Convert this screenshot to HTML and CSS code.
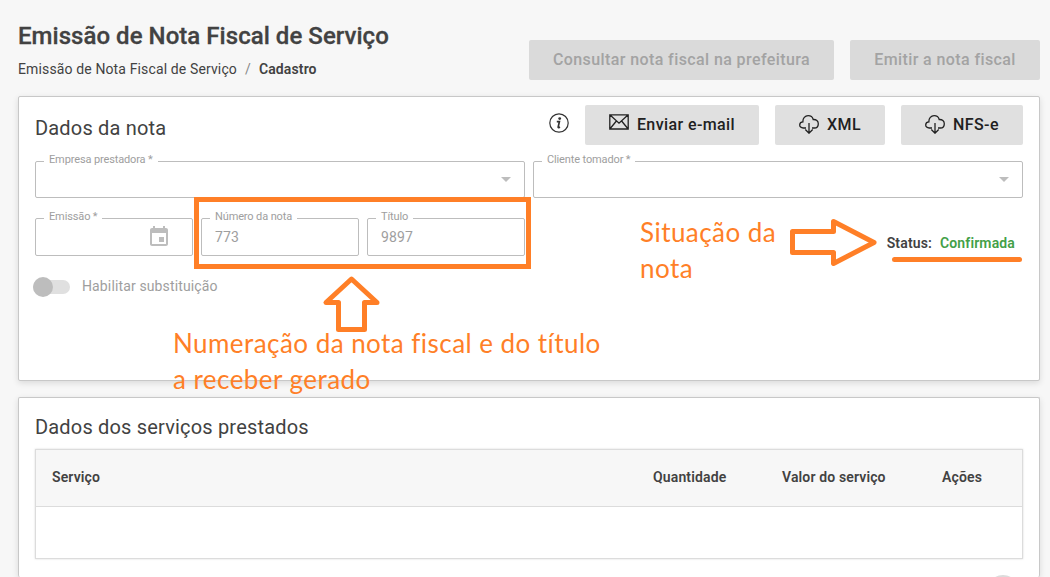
FILE: index.html
```html
<!DOCTYPE html>
<html lang="pt-BR">
<head>
<meta charset="UTF-8">
<meta name="viewport" content="width=device-width, initial-scale=1.0">
<title>Emissão de Nota Fiscal de Serviço</title>
<link rel="stylesheet" href="styles.css">
</head>
<body>
    <header class="page-header">
        <div>
            <h1>Emissão de Nota Fiscal de Serviço</h1>
            <nav class="breadcrumb">
                <span>Emissão de Nota Fiscal de Serviço</span>
                <span class="separator">/</span>
                <strong>Cadastro</strong>
            </nav>
        </div>
        <div class="header-actions">
            <button type="button" class="btn btn-consultar" disabled>Consultar nota fiscal na prefeitura</button>
            <button type="button" class="btn btn-emitir" disabled>Emitir a nota fiscal</button>
        </div>
    </header>

    <section class="card card-nota">
        <div class="card-top">
            <h2>Dados da nota</h2>
            <div class="card-actions">
                <svg class="info" viewBox="0 0 20 20" width="20" height="20">
                    <circle cx="10" cy="10" r="9.2" fill="none" stroke="#333" stroke-width="1.2"/>
                    <circle cx="10.700" cy="5.600" r="1.400" fill="#333"/>
                    <path d="M7.800 8.600h2.600L9.200 13.800q-.2 1.100.6.8l1.200-.6" fill="none" stroke="#333" stroke-width="1.700"/>
                </svg>
                <button type="button" class="btn btn-email">
                    <svg class="icon mail" viewBox="0 0 20 16" width="20" height="16">
                        <path d="M.8.8h18.4v14.200H.8zM.8.8l9.200 8.400L19.200.8M.8 15l6.600-8M19.200 15l-6.600-8"/>
                    </svg>
                    Enviar e-mail
                </button>
                <button type="button" class="btn btn-xml">
                    <svg class="icon cloud" viewBox="0 0 20 19" width="20" height="19">
                        <path d="M7 13H4.200C2 13 .7 11.600.7 9.900.7 8.100 2 6.900 3.900 6.800 3.700 3.300 6.100.7 9.100.7c2.500 0 4.500 1.400 5.100 3.800 3-.2 5.100 1.600 5.100 4.200 0 2.500-1.600 4.300-4 4.300H13M10 8v10M6.300 14.500 10 18.200l3.700-3.700"/>
                    </svg>
                    XML
                </button>
                <button type="button" class="btn btn-nfse">
                    <svg class="icon cloud" viewBox="0 0 20 19" width="20" height="19">
                        <path d="M7 13H4.200C2 13 .7 11.600.7 9.900.7 8.100 2 6.900 3.900 6.800 3.700 3.300 6.100.7 9.100.7c2.500 0 4.500 1.400 5.100 3.800 3-.2 5.100 1.600 5.100 4.200 0 2.500-1.600 4.300-4 4.300H13M10 8v10M6.300 14.500 10 18.200l3.700-3.700"/>
                    </svg>
                    NFS-e
                </button>
            </div>
        </div>

        <div class="row row-empresa">
            <div class="field"><label>Empresa prestadora *</label><span class="caret"></span></div>
            <div class="field"><label>Cliente tomador *</label><span class="caret"></span></div>
        </div>
        <div class="row row-numero">
            <div class="field">
                <label>Emissão *</label>
                <svg class="calendar" viewBox="0 0 18 20" width="18" height="20">
                    <path d="M16 2h-1V0h-2v2H5V0H3v2H2C.9 2 0 2.900 0 4v14c0 1.100.9 2 2 2h14c1.100 0 2-.9 2-2V4c0-1.100-.9-2-2-2zm0 16H2V7h14zM9 11h5v5H9z" fill="#bdbdbd"/>
                </svg>
            </div>
            <div class="field"><label>Número da nota</label><span class="value">773</span></div>
            <div class="field"><label>Título</label><span class="value">9897</span></div>
            <div class="status"><span>Status:</span> <span class="confirmada">Confirmada</span></div>
        </div>
        <div class="switch-row">
            <span class="switch"></span>
            <span class="switch-text">Habilitar substituição</span>
        </div>
    </section>

    <section class="card card-servicos">
        <h2>Dados dos serviços prestados</h2>
        <div class="table">
            <div class="table-head">
                <span>Serviço</span>
                <span>Quantidade</span>
                <span>Valor do serviço</span>
                <span>Ações</span>
            </div>
            <div class="table-body"></div>
        </div>
        <svg class="add" viewBox="0 0 32 2" width="32" height="2">
            <circle cx="16" cy="16" r="16" fill="#dcdcdc"/>
        </svg>
    </section>

    <!-- marcações de ajuda sobre a tela -->
    <svg class="marks" viewBox="0 0 1050 577" width="1050" height="577">
        <rect x="196.500" y="199.500" width="332" height="67"/>
        <g stroke-linejoin="round">
            <path d="M351.500 279 326 302.500h12.500v27h26v-27H377z"/>
            <path d="M792.500 231.500h41v-10L874 242.500l-40.500 21v-11h-41z"/>
        </g>
        <path d="M894.500 259.500h125" stroke-linecap="round"/>
    </svg>
    <p class="note note-numero">Numeração da nota fiscal e do título<br><span>a receber gerado</span></p>
    <p class="note note-status">Situação da<br><span>nota</span></p>
</body>
</html>
```

FILE: styles.css
```css
* {
    box-sizing: border-box;
}
body {
    margin: 0;
    height: 577px;
    overflow: hidden;
    position: relative;
    padding: 0 10px 0 18px;
    background: #f7f7f7;
    color: #424242;
    font-family: Roboto, "Liberation Sans", sans-serif;
    font-size: 14px;
}
h1, h2, p {
    margin: 0;
}
h1 {
    font-size: 24px;
    font-weight: 500;
    line-height: 32px;
    letter-spacing: 0.04px;
    -webkit-text-stroke: 0.3px #424242;
}
h2 {
    font-size: 20px;
    font-weight: 400;
    line-height: 24px;
    letter-spacing: 0.18px;
}

/* header */
.page-header {
    display: flex;
    justify-content: space-between;
    height: 96px;
    padding-top: 20px;
}
.breadcrumb {
    display: flex;
    gap: 8px;
    margin-top: 7px;
    line-height: 20px;
    letter-spacing: 0.13px;
}
.breadcrumb strong {
    font-weight: 600;
}
.separator {
    color: #888;
}
.header-actions {
    display: flex;
    gap: 16px;
    padding-top: 20px;
}
.btn {
    display: flex;
    align-items: center;
    justify-content: center;
    height: 40px;
    padding: 0 0 2px;
    border: none;
    border-radius: 2px;
    background: #e0e0e0;
    color: #212121;
    font: 500 16px Roboto, "Liberation Sans", sans-serif;
    letter-spacing: 0.4px;
    white-space: nowrap;
}
.btn:disabled {
    background: #dadada;
    color: #a3a3a3;
}
.btn-consultar { width: 305px; }
.btn-emitir { width: 190px; }
.btn-email { width: 174px; }
.btn-xml { width: 110px; }
.btn-nfse { width: 122px; }

/* cards */
.card {
    border: 1px solid #c8c8c8;
    border-radius: 2px;
    background: #fff;
    padding: 0 16px;
    box-shadow: 0 2px 6px rgba(0, 0, 0, 0.12);
}
.card-nota {
    height: 285px;
    padding-top: 8px;
}
.card-top {
    display: flex;
    justify-content: space-between;
    height: 56px;
}
.card-top h2 {
    margin-top: 11px;
}
.card-actions {
    display: flex;
    gap: 16px;
}
.info {
    margin-top: 8px;
}
.icon {
    margin-right: 8px;
    fill: none;
    stroke: #212121;
    stroke-width: 1.3;
}
.mail {
    margin-top: -4px;
}

/* outlined fields */
.row {
    display: grid;
    gap: 8px;
}
.row-empresa {
    grid-template-columns: 1fr 1fr;
    height: 37px;
}
.row-numero {
    grid-template-columns: 158px 158px 158px 1fr;
    height: 38px;
    margin-top: 20px;
}
.field {
    position: relative;
    display: flex;
    align-items: center;
    border: 1px solid #bdbdbd;
    border-radius: 2px;
    padding: 0 13px;
    color: #9e9e9e;
}
.field label {
    position: absolute;
    top: -9px;
    left: 8px;
    padding: 0 5px;
    background: #fff;
    font-size: 11px;
    line-height: 14px;
    letter-spacing: -0.13px;
}
.value {
    letter-spacing: 0.15px;
}
.caret {
    margin-left: auto;
    border: 5px solid transparent;
    border-top-color: #bdbdbd;
    border-bottom: none;
}
.calendar {
    margin-left: auto;
    margin-right: 11px;
    margin-top: -3px;
}
.status {
    align-self: center;
    justify-self: end;
    display: flex;
    gap: 8px;
    margin-top: 12px;
    margin-right: 8px;
    font-weight: 600;
    letter-spacing: 0.14px;
}
.confirmada {
    color: #43a047;
}
.switch-row {
    display: flex;
    align-items: center;
    height: 20px;
    margin: 21px 0 0 -2px;
}
.switch {
    position: relative;
    width: 37px;
    height: 14px;
    border-radius: 7px;
    background: #e0e0e0;
}
.switch::before {
    content: "";
    position: absolute;
    top: -3px;
    left: 0;
    width: 20px;
    height: 20px;
    border-radius: 50%;
    background: #bdbdbd;
}
.switch-text {
    margin-left: 12px;
    margin-top: -2px;
    color: #9e9e9e;
    letter-spacing: 0.13px;
}

/* services table */
.card-servicos {
    height: 180px;
    margin-top: 16px;
    padding-top: 17px;
    border-bottom: none;
}
.table {
    margin-top: 10px;
    border: 1px solid #dcdcdc;
    box-shadow: 0 0 2px rgba(0, 0, 0, 0.15);
}
.table-head {
    display: grid;
    grid-template-columns: 601px 129px 160px 1fr;
    align-items: center;
    height: 57px;
    padding: 0 0 2px 16px;
    border-bottom: 1px solid #dcdcdc;
    background: #f7f7f7;
    font-weight: 600;
    letter-spacing: 0.14px;
}
.table-body {
    height: 51px;
}
.add {
    display: block;
    margin: 16px 4px 0 auto;
}

/* help marks */
.marks {
    position: absolute;
    top: 0;
    left: 0;
    fill: none;
    stroke: #ff7f27;
    stroke-width: 5;
}
.note {
    position: absolute;
    color: #ff7f27;
    font-family: Lato, "Open Sans", sans-serif;
    font-size: 26px;
    line-height: 36px;
    letter-spacing: 0.45px;
    font-variant-ligatures: none;
    white-space: nowrap;
}
.note-numero {
    top: 325px;
    left: 173px;
}
.note-status {
    top: 214px;
    left: 640px;
}
```
